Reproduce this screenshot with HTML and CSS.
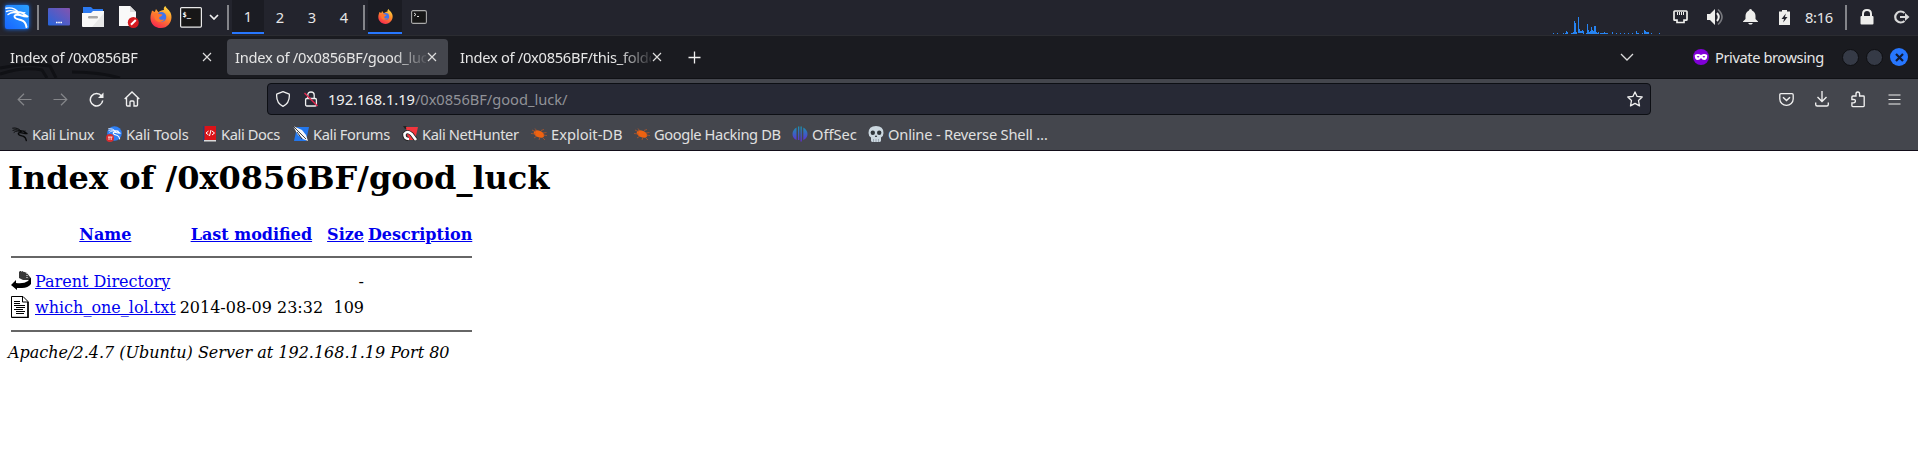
FILE: index.html
```html
<!DOCTYPE html>
<html lang="en">
<head>
<meta charset="utf-8">
<title>Index of /0x0856BF/good_luck</title>
<link rel="stylesheet" href="styles.css">
</head>
<body>
<svg class="defs" width="0" height="0">
  <defs>
    <linearGradient id="gk" x1="0" y1="1" x2="1" y2="0"><stop offset="0" stop-color="#1766ff"/><stop offset="1" stop-color="#2aa0ff"/></linearGradient>
    <linearGradient id="gd" x1="0" y1="1" x2="1" y2="0"><stop offset="0" stop-color="#2465dc"/><stop offset="1" stop-color="#8553ae"/></linearGradient>
    <linearGradient id="gf" x1=".8" y1="0" x2=".3" y2="1"><stop offset="0" stop-color="#ffdf42"/><stop offset=".45" stop-color="#ff8a2a"/><stop offset="1" stop-color="#f7264f"/></linearGradient>
    <linearGradient id="go" x1="0" y1="0" x2="0" y2="16" gradientUnits="userSpaceOnUse"><stop offset="0" stop-color="#1698b0"/><stop offset="1" stop-color="#6427d8"/></linearGradient>
  </defs>
  <symbol id="dragon" viewBox="0 0 24 24">
    <g fill="none" stroke="currentColor" stroke-linecap="round" stroke-linejoin="round">
      <path d="M1 3.200C6 2.200 11 4 14 8M1.500 6.500C6 4.500 10 6 14 8M3 9.500C6 7 9.500 7 13 8.300" stroke-width="1.400"/>
      <path d="M12.500 7.500C16 6.700 18.500 8 19.500 9.500L22.500 11.500L19 11.200C15 10 10.500 8.500 9.500 11C9 14 13 14.300 16.500 15.200C20 16.300 21 18.500 21.500 22" stroke-width="2"/>
      <path d="M17 8L20 7.500" stroke-width="1"/>
    </g>
  </symbol>
  <symbol id="firefox" viewBox="0 0 22 22">
    <path d="M2 4.500L4.800 6L6 3L8.500 6.200C10 5 11.500 4 14 4C13.400 2.500 14 1 15.500 0C16 2.500 20 4 21 8C23 14.500 18.500 22 11 22C4.500 22 0 17 .5 11C.6 8.500 1.500 7 2 4.500Z" fill="url(#gf)"/>
    <circle cx="11.300" cy="11" r="5" fill="#3f74ee"/>
    <path d="M4 7.500C7 6 9 8 12.500 8.500C12 10.500 9.500 10.500 9 12C9.500 14 12.500 14.500 14.500 13C13 17 6 17 4.500 12Z" fill="#ff752d"/>
  </symbol>
  <symbol id="close" viewBox="0 0 10 10"><path d="M1 1L9 9M9 1L1 9" fill="none" stroke="#dedede" stroke-width="1.150"/></symbol>
  <symbol id="bug" viewBox="0 0 16 16">
    <ellipse cx="8" cy="8" rx="5.600" ry="3.200" transform="rotate(24 8 8)" fill="#ef6210"/>
    <path d="M1 4L5 6M4 2.500L6 5M0 7.500L5 8M10 4.500L13 3.500M12 7L15.500 6.500M3 12L6 10M8 14L9 11M14 14L11 11M12 9L16 9.500" stroke="#b2562a" stroke-width=".8"/>
  </symbol>
</svg>

<header class="panel">
  <svg class="launcher" width="26" height="26" viewBox="0 0 26 26"><rect x="1" y="1" width="24" height="24" rx="2" fill="url(#gk)"/><use href="#dragon" x="1" y="1" width="24" height="24"/></svg>
  <i class="sep"></i>
  <svg width="22" height="18" viewBox="0 0 22 18"><rect width="22" height="17.500" rx="1" fill="url(#gd)"/><path d="M8 14.500h6" stroke="#fff" stroke-width="1.500" stroke-dasharray="1.600 .6"/></svg>
  <svg width="22" height="20" viewBox="0 0 22 20"><path d="M1 0h8l2 2h10v8H1z" fill="#2b79f0"/><path d="M0 6h9l2-2h11v15q0 1-1 1H1q-1 0-1-1z" fill="#f8f8f8"/><path d="M22 6v14H10z" fill="#e8e8e8"/><rect x="6" y="9" width="10" height="2.500" rx="1.200" fill="#a7a7a7"/></svg>
  <svg width="21" height="22" viewBox="0 0 21 22"><path d="M0 0h11l6 6v14H0z" fill="#f9f9f9"/><path d="M11 0v6h6z" fill="#ddd"/><circle cx="14.300" cy="16.500" r="5.500" fill="#d61b20"/><path d="M12 18.800L16.800 14" stroke="#fff" stroke-width="2"/></svg>
  <svg width="22" height="22"><use href="#firefox" width="22" height="22"/></svg>
  <svg width="22" height="21" viewBox="0 0 22 21"><rect x=".6" y=".6" width="20.800" height="19.500" rx="1" fill="#171717" stroke="#e9e9e9" stroke-width="1.200"/><text x="2.500" y="9.500" class="prompt">$_</text></svg>
  <svg width="10" height="6" viewBox="0 0 10 6"><path d="M1 1l4 4 4-4" fill="none" stroke="#f0f0f0" stroke-width="1.700"/></svg>
  <i class="sep"></i>
  <span class="space on">1</span><span class="space">2</span><span class="space">3</span><span class="space">4</span>
  <i class="sep"></i>
  <span class="space on"><svg width="15" height="15"><use href="#firefox" width="15" height="15"/></svg></span>
  <svg width="16" height="14" viewBox="0 0 16 14"><rect x=".6" y=".6" width="14.800" height="12.800" rx="1.500" fill="#171717" stroke="#aaa" stroke-width="1.100"/><path d="M3 3l2 1.500L3 6M6 6.500h2" fill="none" stroke="#eee" stroke-width=".9"/></svg>
  <svg class="graph" width="108" height="17" viewBox="0 0 108 17" shape-rendering="crispEdges"><path d="M0 16h1v1h-1zM4 16h1v1h-1zM10 16h1v1h-1zM12 17v-1h1v-2h1v1h1v2zM18 17v-1h2v-1h1v-11h1v2h1v9h1v1h1v-16h1v12h1v2h2v-1h1v3zM30 14h1v3h-1zM33 17v-1h1v-9h1v6h1v2h1v-1h1v-4h1v3h1v1h1v-5h2v6h1v1h1v-1h1v2zM47 16h4v-1h1v1h3v1h-8zM59 15h1v2h-1zM63 16h1v1h-1zM67 16h1v1h-1zM71 16h1v1h-1zM75 16h1v1h-1zM79 16h1v1h-1zM83 17v-3h1v2h2v1zM89 16h1v1h-1zM91 17v-4h1v1h1v1h3v2zM98 16h1v1h-1zM106 16h1v1h-1z" fill="#2684f2"/></svg>
  <svg width="15" height="14" viewBox="0 0 15 14"><path d="M1.800 1h11.400q.8 0 .8.800v7.700q0 .7-.8.700H11v2.300H4v-2.300H1.800q-.8 0-.8-.7V1.800Q1 1 1.800 1z" fill="none" stroke="#eeeeec" stroke-width="1.700"/><path d="M4.500 2v3M6.500 2v3M8.500 2v3M10.500 2v3" stroke="#eeeeec"/></svg>
  <svg width="18" height="18" viewBox="0 0 18 18"><path d="M1 6h3l5-5v16l-5-5H1z" fill="#eeeeec"/><path d="M11 5q3.500 4 0 8" fill="none" stroke="#eeeeec" stroke-width="2"/><path d="M12 1.500q8 7.500 0 15" fill="none" stroke="#77787d" stroke-width="1.700"/></svg>
  <svg width="15" height="16" viewBox="0 0 15 16"><path d="M7.500 0Q9 0 9 1.500Q12.500 3 12.500 7v3L15 12.500V13H0v-.5L2.500 10V7Q2.500 3 6 1.500Q6 0 7.500 0zM5 14h5l-1.500 1.500h-2z" fill="#eeeeec"/></svg>
  <svg width="11" height="15" viewBox="0 0 11 15"><path d="M3 0h5v1.500h3V15H0V1.500h3z" fill="#eeeeec"/><path d="M6.800 3.500L2.500 9H5l-.8 3.500L8.500 7H6z" fill="#22232c"/></svg>
  <span class="clock">8:16</span>
  <i class="sep"></i>
  <svg width="14" height="16" viewBox="0 0 14 16"><path d="M3 8V5Q3 1 7 1T11 5V8" fill="none" stroke="#eeeeec" stroke-width="2"/><rect x=".5" y="7" width="13" height="8.500" rx="1" fill="#eeeeec"/></svg>
  <svg width="16" height="14" viewBox="0 0 16 14"><path d="M10.500 3A5.500 5.500 0 1 0 10.500 11" fill="none" stroke="#d9d9d9" stroke-width="2.200"/><path d="M6 6h5V3l4.500 4L11 11V8H6z" fill="#d9d9d9"/></svg>
</header>

<nav class="tabs">
  <svg class="wallpaper" width="240" height="42" viewBox="0 0 240 42"><path d="M0 32Q25 26 50 30L56 42M0 38Q24 30 42 34l5 8M72 36Q100 36 120 42" fill="none" stroke="#101115" stroke-width="3"/></svg>
  <div class="tab"><span class="label">Index of /0x0856BF</span><svg width="10" height="10"><use href="#close"/></svg></div>
  <div class="tab active"><span class="label">Index of /0x0856BF/good_luck</span><svg width="10" height="10"><use href="#close"/></svg></div>
  <div class="tab"><span class="label">Index of /0x0856BF/this_folder</span><svg width="10" height="10"><use href="#close"/></svg></div>
  <svg class="plus" width="13" height="13" viewBox="0 0 13 13"><path d="M6.500 .5v12M.5 6.500h12" stroke="#f0f0f0" stroke-width="1.300"/></svg>
  <svg class="all" width="14" height="8" viewBox="0 0 14 8"><path d="M1 1l6 6 6-6" fill="none" stroke="#ddd" stroke-width="1.300"/></svg>
  <div class="private"><svg width="16" height="16" viewBox="0 0 16 16"><circle cx="8" cy="8" r="8" fill="#8000d7"/><path d="M1.800 6q3-2 6.200 0q3.200-2 6.200 0q.3 5-3 5q-2 0-3.200-2q-1.200 2-3.200 2q-3.300 0-3-5z" fill="#fff"/><path d="M3.700 7.800q1.500-1.500 2.800 0q-1.300 1.400-2.800 0zM9.500 7.800q1.500-1.500 2.800 0q-1.300 1.400-2.800 0z" fill="#8000d7"/></svg>Private browsing</div>
  <div class="controls"><i></i><i></i><i class="shut"><svg width="9" height="9" viewBox="0 0 9 9"><path d="M1 1l7 7M8 1L1 8" stroke="#101a35" stroke-width="2.200"/></svg></i></div>
</nav>

<div class="toolbar">
  <div class="navrow">
    <svg width="15" height="13" viewBox="0 0 15 13"><path d="M14.500 6.500H1M7 .8L1.200 6.500L7 12.200" fill="none" stroke="#85868a" stroke-width="1.200"/></svg>
    <svg width="15" height="13" viewBox="0 0 15 13"><path d="M.5 6.500H14M8 .8L13.800 6.500L8 12.200" fill="none" stroke="#85868a" stroke-width="1.200"/></svg>
    <svg width="15" height="15" viewBox="0 0 15 15"><path d="M12.500 4A6.200 6.200 0 1 0 13.700 8.500" fill="none" stroke="#f0f0f0" stroke-width="1.500"/><path d="M14.500 .5V6H9z" fill="#f0f0f0"/></svg>
    <svg width="16" height="16" viewBox="0 0 16 16"><path d="M.7 8L8 1l7.300 7M2.500 6.700V14q0 1 1 1H6v-4q0-1 1-1h2q1 0 1 1v4h2.500q1 0 1-1V6.700" fill="none" stroke="#f0f0f0" stroke-width="1.350"/></svg>
    <div class="url">
      <svg width="16" height="16" viewBox="0 0 16 16"><path d="M8 .7L14.300 3.200Q15 12 8 15.300Q1 12 1.700 3.200z" fill="none" stroke="#f0f0f0" stroke-width="1.300" stroke-linejoin="round"/></svg>
      <svg width="14" height="16" viewBox="0 0 14 16"><rect x="1.600" y="7.500" width="10.800" height="7.500" rx="1.200" fill="none" stroke="#f0f0f0" stroke-width="1.300"/><path d="M3.800 7V4Q3.800 1 7 1T10.200 4V7" fill="none" stroke="#f0f0f0" stroke-width="1.300"/><path d="M.5 2L13.500 15" stroke="#e22850" stroke-width="1.400"/></svg>
      <span class="address">192.168.1.19<span>/0x0856BF/good_luck/</span></span>
      <svg class="star" width="16" height="16" viewBox="0 0 16 16"><path d="M8 .9L10.100 5.400L15.200 6L11.500 9.500L12.500 14.900L8 12.400L3.500 14.900L4.500 9.500L.8 6L5.900 5.400z" fill="none" stroke="#f0f0f0" stroke-width="1.300" stroke-linejoin="round"/></svg>
    </div>
    <svg width="15" height="13" viewBox="0 0 15 13"><path d="M2 .7h11q1.200 0 1.200 1.300v4a6.700 6.300 0 0 1-13.400 0V2Q.8.700 2 .7z" fill="none" stroke="#f0f0f0" stroke-width="1.300"/><path d="M4 4.300l3.500 3.200L11 4.300" fill="none" stroke="#f0f0f0" stroke-width="1.500"/></svg>
    <svg width="14" height="16" viewBox="0 0 14 16"><path d="M7 0v10.500M2.500 6L7 10.500L11.500 6M.7 11.500v2q0 1.500 1.500 1.500h9.600q1.500 0 1.500-1.500v-2" fill="none" stroke="#f0f0f0" stroke-width="1.350"/></svg>
    <svg width="14" height="17" viewBox="0 0 14 17"><path d="M2 5h3V3q0-2 1.800-2T8.600 3v2h3.800q.8 0 .8.800v9q0 .8-.8.800H1.800q-.9 0-.9-.8v-3h1.600q1.900 0 1.900-1.700T2.500 8.500H.9V6q0-1 1.100-1z" fill="none" stroke="#f0f0f0" stroke-width="1.350"/></svg>
    <svg width="13" height="11" viewBox="0 0 13 11"><path d="M.5 1h12M.5 5.500h12M.5 10h12" stroke="#f0f0f0" stroke-width="1.200"/></svg>
  </div>
  <div class="bookmarks">
    <span class="tight"><svg width="16" height="16" class="black"><use href="#dragon" width="16" height="16"/></svg>Kali Linux</span>
    <span class="snug"><svg width="16" height="16" viewBox="0 0 16 16"><circle cx="8.500" cy="7.500" r="7.300" fill="#2d7ff5"/><use href="#dragon" x="2" y="1" width="13" height="13"/><circle cx="4" cy="12" r="4" fill="#d92d2f"/><path d="M2 11h4.500M3 11v3M5.200 11v3" stroke="#fff" stroke-width=".8"/></svg>Kali Tools</span>
    <span class="tight"><svg width="14" height="16" viewBox="0 0 14 16"><path d="M0 0h2v15H0z" fill="#274170"/><path d="M1.500 0H13v14H1.500z" fill="#db1318"/><path d="M1 14h12v1.500H1z" fill="#dadada"/><path d="M5.500 5L3 7l2.500 2M9 5l2.500 2L9 9M8 4L6.500 10" fill="none" stroke="#fff"/></svg>Kali Docs</span>
    <span class="tight"><svg width="16" height="16" viewBox="0 0 16 16"><path d="M4 1h12l-3 14H1z" fill="#2377ed"/><path d="M0 0l9 4 4 5 2 6-5-2-5-4z" fill="#f6f6f6"/><path d="M0 0l13 13M4 6l5 7" stroke="#2a2c35" stroke-width=".9"/></svg>Kali Forums</span>
    <span class="tight"><svg width="16" height="16" viewBox="0 0 16 16"><path d="M1 0h3l2 3H3z" fill="#222"/><path d="M4 1h12l-3 13H6z" fill="#f2353d"/><path d="M14 14L9.500 8Q5 4 2.500 8Q2 13 7 13" fill="none" stroke="#222" stroke-width="4.200"/><path d="M14 14L9.500 8Q5 4 2.500 8Q2 13 7 13" fill="none" stroke="#fff" stroke-width="2.600"/></svg>Kali NetHunter</span>
    <span><svg width="16" height="16"><use href="#bug"/></svg>Exploit-DB</span>
    <span class="tight"><svg width="16" height="16"><use href="#bug"/></svg>Google Hacking DB</span>
    <span><svg width="16" height="16" viewBox="0 0 16 16"><path d="M4.500 1.500v12.500Q.5 12 .5 8T4.500 1.500zM6 .5h1.300v13.500L6 14zM8.500.5h1.300v15H8.500zM11.300 1.500Q15.500 4 15.500 8T11.300 14z" fill="url(#go)"/></svg>OffSec</span>
    <span class="snug"><svg width="16" height="16" viewBox="0 0 16 16"><path d="M8 0q7.500 0 7.500 7q0 3-2.500 4.500v3Q13 16 11 16H5q-2 0-2-1.500v-3Q.5 10 .5 7Q.5 0 8 0z" fill="#ccd8e0"/><circle cx="4.800" cy="6.700" r="2.200" fill="#30363b"/><circle cx="11.200" cy="6.700" r="2.200" fill="#30363b"/><path d="M8 9l1.200 2H6.800z" fill="#30363b"/><path d="M5.500 13v3M8 13v3M10.500 13v3" stroke="#87949e" stroke-width=".7"/></svg>Online - Reverse Shell …</span>
  </div>
</div>

<main>
  <h1>Index of /0x0856BF/good_luck</h1>
  <table>
    <tr class="head"><th></th><th><a href="#">Name</a></th><th><a href="#">Last modified</a></th><th><a href="#">Size</a></th><th><a href="#">Description</a></th></tr>
    <tr class="rule"><th colspan="5"><hr></th></tr>
    <tr class="entry"><td><svg width="20" height="22" viewBox="0 0 20 22"><path d="M8 1h3l5 2 3 4v3H12L8 8z" fill="#383838"/><path d="M8 1h8v8" fill="none" stroke="#fff" stroke-dasharray="1 1"/><path d="M20 7v7q-3 4-9 4H6v2L0 15l5-5v3q8 1 12-2z" fill="#000"/></svg></td><td><a href="#">Parent Directory</a></td><td></td><td class="num">-</td><td></td></tr>
    <tr class="entry"><td><svg width="20" height="22" viewBox="0 0 20 22"><path d="M.5.500H12l5 5v16H.5z" fill="#fff" stroke="#000"/><path d="M17 6v15.500H1" fill="none" stroke="#000" stroke-width="1.500"/><path d="M11.500.5v5.500H17" fill="none" stroke="#000"/><path d="M3 5.500h6M3 7.500h6M3 9.500h11M5 11.500h9M3 13.500h9M5 15.500h9M5 17.500h8" stroke="#000"/></svg></td><td><a href="#">which_one_lol.txt</a></td><td class="num">2014-08-09 23:32</td><td class="num">&nbsp;109</td><td></td></tr>
    <tr class="rule"><th colspan="5"><hr></th></tr>
  </table>
  <address>Apache/2.4.7 (Ubuntu) Server at 192.168.1.19 Port 80</address>
</main>
</body>
</html>
```
FILE: styles.css
```css
* { box-sizing: border-box; }
body { margin: 0; width: 1918px; height: 449px; overflow: hidden; background: #fff; font-family: "Noto Sans", sans-serif; font-size: 14.67px; color: #e6e6e6; }
svg { display: block; flex: none; }
.defs { position: absolute; }

.panel {
  display: grid;
  height: 36px;
  padding-left: 4px;
  padding-bottom: 2px;
  align-items: center;
  background: #23242d;
  border-bottom: 1px solid #2b2c31;
  grid-template-columns: 33px 11px 34px 37px 31px 30px 29px 18px 5px 32px 32px 32px 35px 5px 43px 1142px 120px 33px 37px 36px 26px 40px 15px 34px 16px;
}
.launcher { color: #fff; filter: drop-shadow(0 0 2px #1473ff); }
.sep { width: 2px; height: 25px; background: #84858a; }
.prompt { font: bold 7px "DejaVu Sans Mono", monospace; fill: #fff; }
.space { display: flex; align-items: center; justify-content: center; width: 32px; height: 34px; align-self: start; }
.space.on { background: #1b1c23; border-bottom: 2px solid #2777ff; }
.space:has(svg) { width: 34px; }
.graph { align-self: end; }
.clock { letter-spacing: -0.3px; }

.tabs { position: relative; display: flex; align-items: center; height: 43px; padding: 0 10px 0 2px; background: #1a1b20; border-bottom: 1px solid #101115; }
.wallpaper { position: absolute; left: 0; top: 0; }
.tab { position: relative; display: flex; flex: none; align-items: center; justify-content: space-between; width: 221px; height: 36px; padding: 0 11px 0 8px; border-radius: 4px; margin-right: 4px; }
.tab.active { background: #44464d; }
.label { width: 191px; overflow: hidden; white-space: nowrap; letter-spacing: -0.28px; mask-image: linear-gradient(90deg, #000 158px, transparent 195px); }
.plus { margin-left: 11px; }
.all { margin-left: 919px; }
.private { display: flex; flex: none; align-items: center; gap: 6px; margin-left: 59px; width: 132px; white-space: nowrap; letter-spacing: -0.42px; }
.controls { display: flex; flex: none; align-items: center; gap: 7px; margin-left: auto; }
.controls i { display: flex; align-items: center; justify-content: center; width: 17px; height: 17px; border-radius: 50%; background: #353a46; border: 1px solid #0e0f12; }
.controls .shut { width: 18px; height: 18px; background: #2777ff; border: 0; }

.toolbar { height: 72px; background: #44464d; border-bottom: 1px solid #120d19; }
.navrow { display: grid; align-items: center; height: 40px; padding-left: 17px; grid-template-columns: 36px 36px 35px 143px 1512px 36px 36px 37px 13px; }
.url { display: flex; align-items: center; width: 1384px; height: 32px; padding: 0 7px; background: #272935; border: 1px solid #0d0f14; border-radius: 4px; }
.url svg + svg { margin-left: 13px; }
.address { margin-left: 10px; color: #f0f0f0; letter-spacing: -0.03px; }
.address span { color: #919298; }
.url .star { margin-left: auto; }
.bookmarks { display: grid; align-items: center; height: 30px; padding-left: 12px; white-space: nowrap; grid-template-columns: 94px 97px 90px 109px 129px 103px 158px 76px 180px; }
.bookmarks span { display: flex; align-items: center; gap: 4px; color: #e0e0e0; }
.bookmarks .tight { letter-spacing: -0.38px; }
.bookmarks .snug { letter-spacing: -0.18px; }
.bookmarks svg { color: #fff; }
.bookmarks .black { color: #08090a; }

main { padding: 8px; color: #000; font: 16px "DejaVu Serif", serif; }
h1 { margin: 0 0 23px; font-size: 32px; line-height: 39px; }
table { border-spacing: 2px; border-collapse: separate; font-size: 16px; }
th, td { padding: 1px; line-height: 19px; white-space: nowrap; }
td svg { width: 20px; }
.head { height: 22px; }
.entry { height: 24px; }
.rule hr { height: 2px; margin: 8px 0; background: #666; border: 0; }
.num { text-align: right; }
a { color: #0000ee; }
address { line-height: 19px; }
```
